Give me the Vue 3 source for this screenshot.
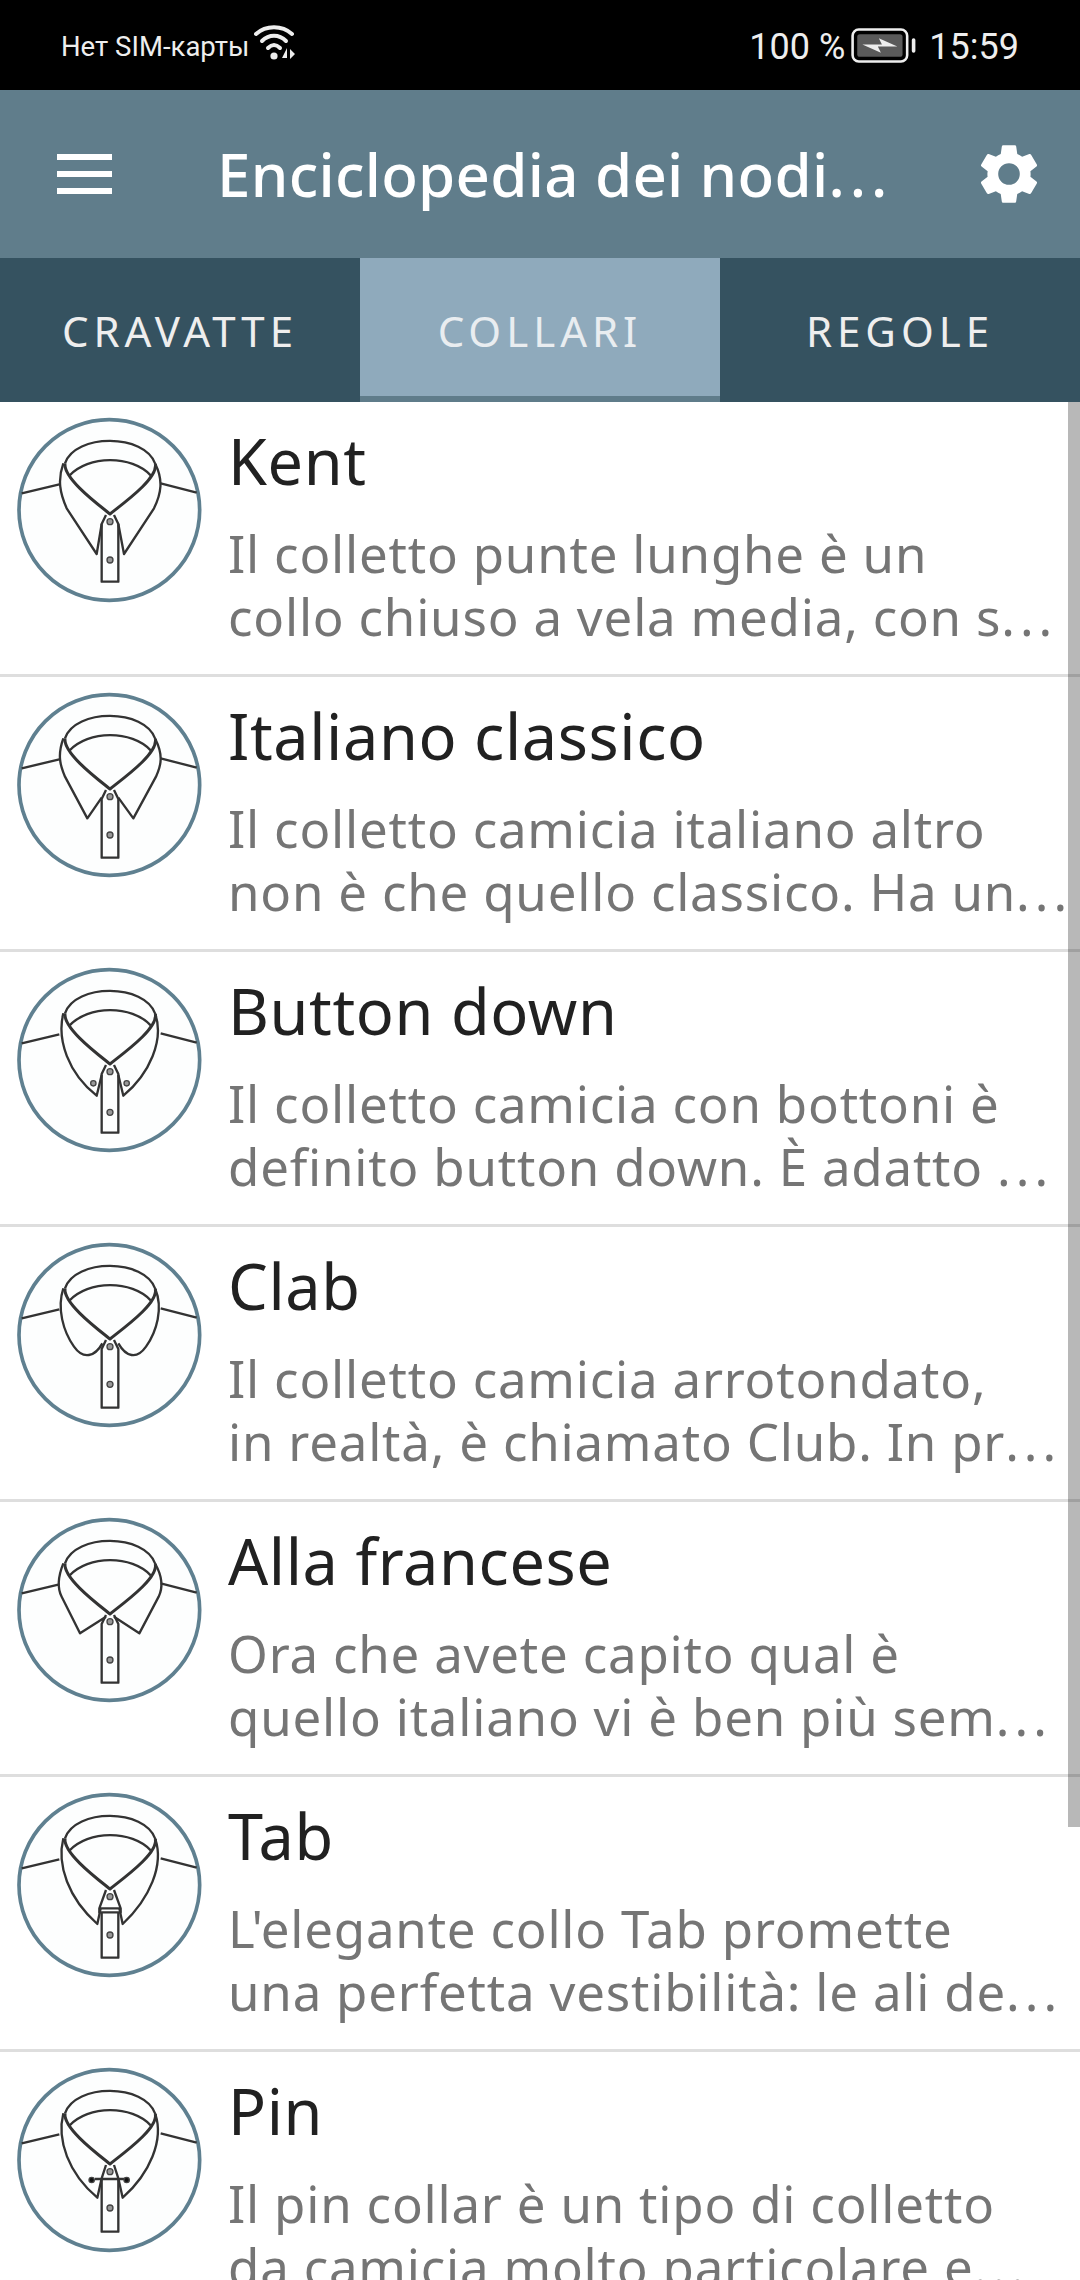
<template>
  <div class="screen">
    <div class="status-bar">
      <div class="status-left">
        <span class="sim">Нет SIM-карты</span>
        <svg class="wifi" viewBox="0 0 42 36" width="42" height="36">
          <path d="M2 9 C12 0 28 0 38 9" fill="none" stroke="#eee" stroke-width="4" stroke-linecap="round" />
          <path d="M8 16 C15 9 25 9 32 16" fill="none" stroke="#eee" stroke-width="4" stroke-linecap="round" />
          <path d="M14 23 C18 19 22 19 26 23" fill="none" stroke="#eee" stroke-width="4" stroke-linecap="round" />
          <circle cx="20" cy="31" r="3.6" fill="#eee" />
          <path d="M33 23 V33 H28 Z M36 34 V24 L41 29 Z" fill="#eee" />
        </svg>
      </div>
      <div class="status-right">
        <span>100 %</span>
        <svg class="battery" viewBox="0 0 64 34" width="66" height="35">
          <rect x="1.5" y="1.5" width="53" height="31" rx="6" fill="none" stroke="#eee" stroke-width="2.5" />
          <rect x="6" y="6" width="44" height="22" rx="2.5" fill="#5a5a5a" />
          <path d="M11 16 L30 16 L27 10 L45 18 L26 18 L29 24 Z" fill="#eee" />
          <rect x="59" y="10" width="3.5" height="14" rx="1.7" fill="#eee" />
        </svg>
        <span class="time">15:59</span>
      </div>
    </div>

    <header class="toolbar">
      <div class="menu-icon">
        <i></i><i></i><i></i>
      </div>
      <div class="title">Enciclopedia dei nodi<span class="dots">...</span></div>
      <svg class="gear" viewBox="0 0 24 24" width="72" height="72">
        <path fill="#fff" d="M19.14 12.94c.04-.3.06-.61.06-.94s-.02-.64-.07-.94l2.03-1.58a.49.49 0 0 0 .12-.61l-1.92-3.32a.49.49 0 0 0-.59-.22l-2.39.96a7 7 0 0 0-1.62-.94l-.36-2.54a.48.48 0 0 0-.48-.41h-3.84a.48.48 0 0 0-.47.41l-.36 2.54c-.59.24-1.13.57-1.62.94l-2.39-.96a.49.49 0 0 0-.59.22L2.74 8.87a.48.48 0 0 0 .12.61l2.03 1.58c-.05.3-.09.63-.09.94s.02.64.07.94l-2.03 1.58a.49.49 0 0 0-.12.61l1.92 3.32c.12.22.37.29.59.22l2.39-.96c.5.38 1.03.7 1.62.94l.36 2.54c.05.24.24.41.48.41h3.84c.24 0 .44-.17.47-.41l.36-2.54c.59-.24 1.13-.56 1.62-.94l2.39.96c.22.08.47 0 .59-.22l1.92-3.32a.48.48 0 0 0-.12-.61l-2.01-1.58zM12 15.6A3.6 3.6 0 1 1 12 8.4a3.6 3.6 0 0 1 0 7.2z" />
      </svg>
    </header>

    <nav class="tabs">
      <div v-for="t in tabs" :key="t" class="tab" :class="{ active: t === 'COLLARI' }">{{ t }}</div>
    </nav>

    <div class="list">
      <div v-for="item in collars" :key="item.name" class="row">
        <svg class="thumb" viewBox="45 48 567 567" width="189" height="189">
          <circle cx="328" cy="330" r="271" fill="#fdfefe" stroke="#5f8090" stroke-width="11" />
          <g fill="none" stroke="#333" stroke-width="7" stroke-linejoin="round">
            <path d="M65 280 L178 253 M590 278 L482 250" />
            <path d="M195 190 C225 100 435 100 466 192" />
            <path d="M195 190 C190 235 290 310 330 342 C370 310 475 235 466 192" stroke-width="9" />
            <path d="M207 228 C265 165 395 165 452 226" />
            <path :d="item.wings" />
            <path :d="item.placket" />
          </g>
          <g fill="#999" stroke="#444" stroke-width="4">
            <circle cx="330" cy="365" r="9" />
            <circle cx="330" :cy="item.lowerButton" r="9" />
            <circle v-for="b in item.extra" :key="b[0]" :cx="b[0]" :cy="b[1]" r="8" :fill="b[2] || '#999'" />
          </g>
        </svg>
        <div class="text">
          <div class="name">{{ item.name }}</div>
          <div class="desc">{{ item.line1 }}</div>
          <div class="desc">{{ item.line2 }}<span class="dots">...</span></div>
        </div>
      </div>
      <div class="scrollbar"></div>
    </div>
  </div>
</template>

<script setup>
const tabs = ['CRAVATTE', 'COLLARI', 'REGOLE']

const plainPlacket = 'M318 345 L305 372 V548 H355 V372 L342 345'

const collars = [
  {
    name: 'Kent',
    line1: 'Il colletto punte lunghe è un',
    line2: 'collo chiuso a vela media, con s',
    wings: 'M190 190 C172 240 180 280 200 325 L290 462 L305 372 M466 192 C490 240 484 280 462 325 L372 462 L355 372',
    placket: 'M318 345 L305 372 V545 H355 V372 L342 345',
    lowerButton: 480,
  },
  {
    name: 'Italiano classico',
    line1: 'Il colletto camicia italiano altro',
    line2: 'non è che quello classico. Ha un',
    wings: 'M190 190 C172 240 180 270 195 305 L262 430 L305 368 M466 192 C490 240 484 270 468 305 L400 430 L355 368',
    placket: plainPlacket,
    lowerButton: 480,
  },
  {
    name: 'Button down',
    line1: 'Il colletto camicia con bottoni è',
    line2: 'definito button down. È adatto ',
    wings: 'M190 190 C170 270 205 370 290 437 L305 375 M466 192 C492 270 450 370 370 437 L355 375',
    placket: plainPlacket,
    lowerButton: 487,
    extra: [[280, 400], [380, 400]],
  },
  {
    name: 'Clab',
    line1: 'Il colletto camicia arrotondato,',
    line2: 'in realtà, è chiamato Club. In pr',
    wings: 'M190 190 C170 250 190 320 222 365 C250 405 285 395 307 355 M466 192 C490 250 470 320 438 365 C410 405 378 395 355 355',
    placket: plainPlacket,
    lowerButton: 478,
  },
  {
    name: 'Alla francese',
    line1: 'Ora che avete capito qual è',
    line2: 'quello italiano vi è ben più sem',
    wings: 'M190 190 C172 235 172 265 185 290 L240 400 L318 350 M466 192 C490 235 488 265 476 290 L418 400 L342 350',
    placket: plainPlacket,
    lowerButton: 480,
  },
  {
    name: 'Tab',
    line1: "L'elegante collo Tab promette",
    line2: 'una perfetta vestibilità: le ali de',
    wings: 'M190 190 C170 270 205 370 292 447 L302 400 M466 192 C492 270 450 370 368 447 L358 400',
    placket: 'M318 345 L298 400 V412 H362 V400 L342 345 M305 412 V548 H355 V412 M298 400 H362',
    lowerButton: 480,
  },
  {
    name: 'Pin',
    line1: 'Il pin collar è un tipo di colletto',
    line2: 'da camicia molto particolare e',
    wings: 'M190 190 C170 270 205 370 292 443 L305 385 M466 192 C492 270 450 370 368 443 L355 385',
    placket: 'M318 345 L305 385 V545 H355 V385 L342 345 M285 387 H375',
    lowerButton: 474,
    extra: [[275, 390, '#111'], [380, 390, '#111']],
  },
]
</script>

<style scoped>
.screen {
  position: relative;
  width: 1080px;
  height: 2280px;
  overflow: hidden;
  background: #fff;
  font-family: "Noto Sans", Lato, sans-serif;
}

.status-bar {
  height: 90px;
  box-sizing: border-box;
  padding: 0 61px;
  background: #000;
  color: #eee;
  display: flex;
  align-items: center;
  justify-content: space-between;
  font-family: Roboto, sans-serif;
}

.status-left {
  display: flex;
  align-items: center;
  gap: 5px;
}

.sim {
  font-size: 27.5px;
  margin-top: 2px;
}

.wifi {
  margin-top: -4px;
}

.status-right {
  display: flex;
  align-items: center;
  gap: 6px;
  font-size: 36px;
  padding-top: 3px;
}

.battery {
  margin-top: -3px;
}

.time {
  margin-left: 6px;
}

.toolbar {
  height: 168px;
  background: #607d8b;
  display: flex;
  align-items: center;
  box-sizing: border-box;
  padding: 0 35px 0 57px;
  color: #fff;
}

.menu-icon {
  width: 55px;
  display: flex;
  flex-direction: column;
  gap: 11px;
}

.menu-icon i {
  display: block;
  height: 6px;
  background: #fff;
}

.title {
  flex: 1;
  margin-left: 105px;
  font-size: 60px;
  font-weight: 500;
  letter-spacing: 0.3px;
  white-space: nowrap;
}

.title .dots {
  letter-spacing: 5px;
}

.tabs {
  display: grid;
  grid-template-columns: repeat(3, 360px);
  height: 144px;
  background: #355260;
}

.tab {
  display: flex;
  align-items: center;
  justify-content: center;
  color: #eee;
  font-size: 42px;
  letter-spacing: 5px;
}

.tab.active {
  background: #8faabc;
  border-bottom: 6px solid #5f7c8a;
  box-sizing: border-box;
  padding-top: 6px;
  color: #e9edf0;
}

.list {
  position: relative;
}

.row {
  height: 275px;
  box-sizing: border-box;
  border-bottom: 3px solid #dedede;
  display: flex;
  align-items: flex-start;
  padding: 14px 0 0 15px;
}

.thumb {
  flex: none;
  filter: blur(0.5px);
}

.text {
  margin-left: 24px;
  white-space: pre;
}

.name {
  font-size: 63px;
  line-height: 78px;
  letter-spacing: 0.6px;
  color: #212121;
  margin-top: 6px;
}

.desc {
  font-size: 51px;
  line-height: 63px;
  letter-spacing: 0.8px;
  color: #757575;
}

.desc .dots {
  letter-spacing: 5px;
}

.name + .desc {
  margin-top: 22px;
}

/* scrollbar thumb sits over the rows */
.scrollbar {
  position: absolute;
  top: 0;
  right: 0;
  width: 12px;
  height: 1425px;
  background: rgba(0, 0, 0, 0.28);
}
</style>
